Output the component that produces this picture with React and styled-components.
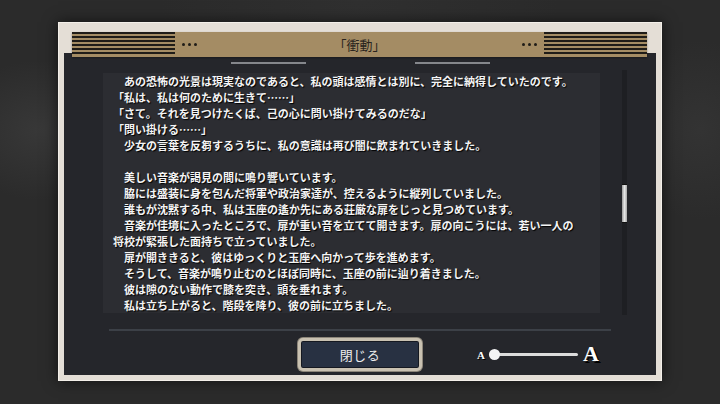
import React from "react";
import styled, { createGlobalStyle } from "styled-components";

const GlobalStyle = createGlobalStyle`
  html, body {
    margin: 0;
    padding: 0;
    background: #2a2a2a;
  }
  body {
    font-family: "Noto Sans CJK JP", "Noto Sans", sans-serif;
  }
`;

const lines = [
  { text: "あの恐怖の光景は現実なのであると、私の頭は感情とは別に、完全に納得していたのです。", indent: true },
  { text: "「私は、私は何のために生きて……」" },
  { text: "「さて。それを見つけたくば、己の心に問い掛けてみるのだな」" },
  { text: "「問い掛ける……」" },
  { text: "少女の言葉を反芻するうちに、私の意識は再び闇に飲まれていきました。", indent: true },
  { text: "" },
  { text: "美しい音楽が謁見の間に鳴り響いています。", indent: true },
  { text: "脇には盛装に身を包んだ将軍や政治家達が、控えるように縦列していました。", indent: true },
  { text: "誰もが沈黙する中、私は玉座の遙か先にある荘厳な扉をじっと見つめています。", indent: true },
  { text: "音楽が佳境に入ったところで、扉が重い音を立てて開きます。扉の向こうには、若い一人の", indent: true },
  { text: "将校が緊張した面持ちで立っていました。" },
  { text: "扉が開ききると、彼はゆっくりと玉座へ向かって歩を進めます。", indent: true },
  { text: "そうして、音楽が鳴り止むのとほぼ同時に、玉座の前に辿り着きました。", indent: true },
  { text: "彼は隙のない動作で膝を突き、頭を垂れます。", indent: true },
  { text: "私は立ち上がると、階段を降り、彼の前に立ちました。", indent: true },
];

const App = () => {
  return (
    <Page lang="ja">
      <GlobalStyle />
      <Frame>
        <Header>
          <Stripes />
          <Dots>
            <span />
            <span />
            <span />
          </Dots>
          <Title>「衝動」</Title>
          <Dots>
            <span />
            <span />
            <span />
          </Dots>
          <Stripes />
        </Header>
        <Panel>
          <DecoLines>
            <span />
            <span />
          </DecoLines>
          <Body>
            <TextBox>
              {lines.map((l, i) => (
                <Line key={i} $indent={l.indent}>
                  {l.text || "\u00a0"}
                </Line>
              ))}
            </TextBox>
            <ScrollTrack>
              <Thumb />
            </ScrollTrack>
          </Body>
          <Divider />
          <Footer>
            <CloseButton>閉じる</CloseButton>
            <SizeSlider>
              <SmallA>A</SmallA>
              <Track>
                <Knob />
              </Track>
              <BigA>A</BigA>
            </SizeSlider>
          </Footer>
        </Panel>
      </Frame>
    </Page>
  );
};

const Page = styled.div`
  width: 720px;
  height: 404px;
  overflow: hidden;
  box-sizing: border-box;
  padding-top: 22px;
  display: flex;
  justify-content: center;
  background:
    radial-gradient(ellipse 90px 70px at 40px 130px, rgba(80, 80, 80, 0.35), transparent),
    radial-gradient(ellipse 80px 90px at 700px 130px, rgba(70, 70, 70, 0.3), transparent),
    radial-gradient(ellipse 200px 120px at 360px 0px, rgba(60, 60, 60, 0.3), transparent),
    #2b2b2b;
`;

const Frame = styled.div`
  width: 604px;
  height: 359px;
  box-sizing: border-box;
  padding: 10px 6px 6px 6px;
  background: #e4ded6;
  box-shadow:
    0 0 14px rgba(0, 0, 0, 0.6),
    inset 0 0 0 1px #f3efe9,
    inset -3px 0 0 -2px #b9b2a8;
  display: flex;
  flex-direction: column;
`;

const Header = styled.div`
  position: relative;
  z-index: 1;
  height: 25px;
  margin: 0 9px -4px 8px;
  background: #a48c64;
  display: flex;
  align-items: center;
  box-shadow: 0 1px 2px rgba(0, 0, 0, 0.35);
`;

const Stripes = styled.div`
  width: 103px;
  height: 24px;
  align-self: flex-start;
  background: repeating-linear-gradient(
    to bottom,
    #1f1c18 0px,
    #1f1c18 2px,
    #a48c64 2px,
    #a48c64 4px
  );
`;

const Dots = styled.div`
  display: flex;
  gap: 3px;
  margin: 0 7px;
  span {
    width: 3px;
    height: 3px;
    border-radius: 50%;
    background: #1f1c18;
  }
`;

const Title = styled.div`
  flex: 1;
  text-align: center;
  font-size: 13px;
  color: #2a251e;
  line-height: 25px;
`;

const Panel = styled.div`
  flex: 1;
  background: #25262b;
  display: flex;
  flex-direction: column;
  padding: 9px 0 4px 0;
  box-sizing: border-box;
`;

const DecoLines = styled.div`
  display: flex;
  justify-content: center;
  gap: 109px;
  span {
    width: 75px;
    height: 2px;
    background: #85878c;
  }
`;

const Body = styled.div`
  display: flex;
  height: 245px;
  margin-top: 6px;
  padding-left: 39px;
`;

const TextBox = styled.div`
  width: 497px;
  height: 240px;
  margin-top: 3px;
  overflow: hidden;
  box-sizing: border-box;
  padding: 0 0 0 10px;
  background: #2c2d32;
`;

const Line = styled.div`
  font-size: 11px;
  line-height: 16px;
  font-weight: 700;
  color: #f4f4f4;
  white-space: nowrap;
  text-indent: ${(p) => (p.$indent ? "1em" : "0")};
  text-shadow: 1px 1px 1px #000;
`;

const ScrollTrack = styled.div`
  position: relative;
  width: 5px;
  margin-left: 22px;
  background: #1e1f23;
`;

const Thumb = styled.div`
  position: absolute;
  left: 0;
  top: 115px;
  width: 5px;
  height: 37px;
  background: linear-gradient(to right, #9a9a9a, #e6e6e6 50%, #a8a8a8);
  box-shadow: 0 -1px 0 #111, 0 1px 0 #111;
`;

const Divider = styled.div`
  height: 2px;
  width: 502px;
  margin: 14px 0 0 45px;
  background: #3c4047;
`;

const Footer = styled.div`
  display: grid;
  grid-template-columns: 1fr 124px 1fr;
  align-items: center;
  height: 33px;
  margin-top: 7px;
`;

const CloseButton = styled.button`
  grid-column: 2;
  height: 33px;
  box-sizing: border-box;
  padding: 0;
  border: 3px solid #c9c1b1;
  border-radius: 5px;
  background: #283142;
  box-shadow:
    inset 0 0 0 1px #151820,
    0 0 0 1px #8d867a;
  color: #eeeeee;
  font-family: "Noto Sans CJK JP", sans-serif;
  font-size: 13px;
  letter-spacing: 0.5px;
  cursor: pointer;
`;

const SizeSlider = styled.div`
  grid-column: 3;
  display: flex;
  align-items: center;
  margin-left: 55px;
  font-family: "Liberation Serif", "DejaVu Serif", serif;
  font-weight: 700;
  color: #ffffff;
`;

const SmallA = styled.span`
  font-size: 11px;
  line-height: 1;
  text-shadow: 1px 1px 0 #000;
  margin-right: 4px;
  margin-top: 1px;
`;

const Track = styled.div`
  position: relative;
  width: 89px;
  height: 3px;
  border-radius: 2px;
  background: #dcdcdc;
`;

const Knob = styled.div`
  position: absolute;
  left: 0;
  top: -4px;
  width: 11px;
  height: 11px;
  border-radius: 50%;
  background: #f4f4f4;
`;

const BigA = styled.span`
  font-size: 22px;
  line-height: 1;
  margin-left: 5px;
  margin-top: -2px;
  text-shadow: 2px 2px 0 #000;
`;

export default App;
